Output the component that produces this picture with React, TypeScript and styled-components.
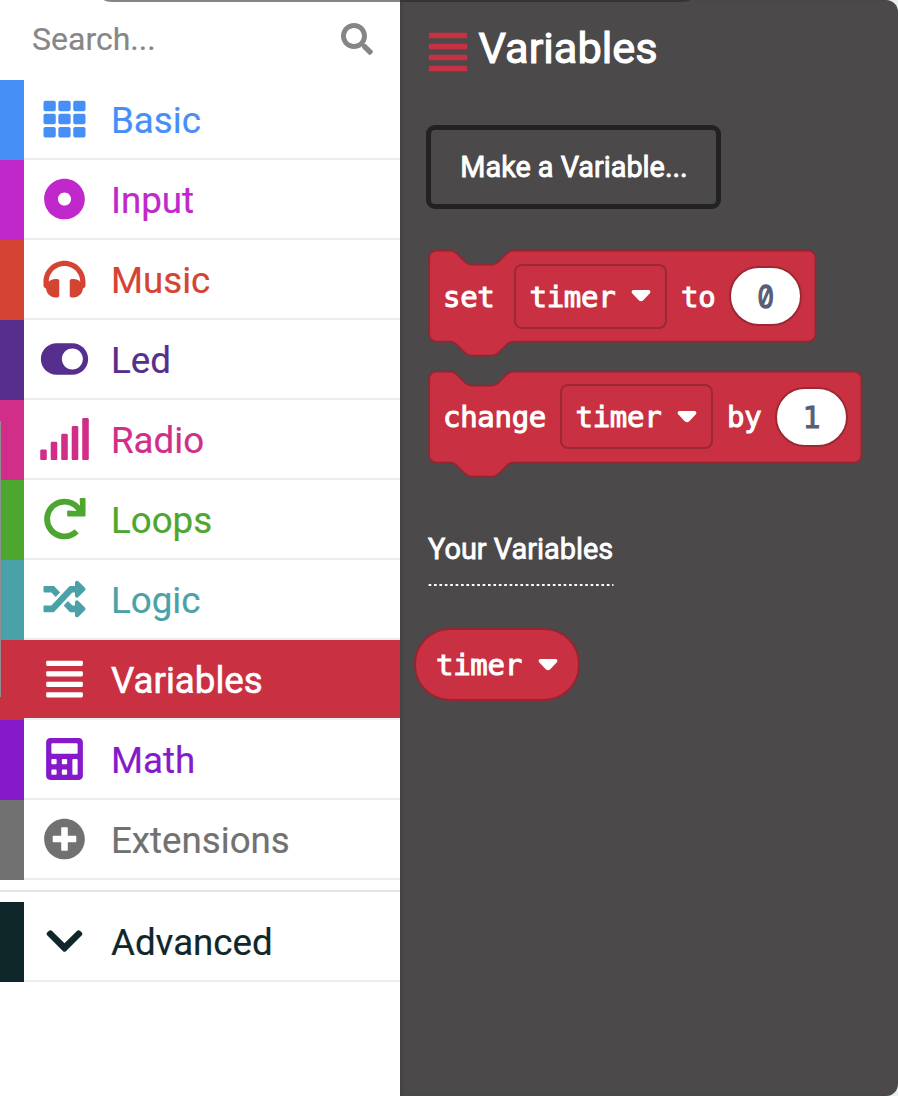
import React from "react";
import styled, { createGlobalStyle } from "styled-components";
import type { IconType } from "react-icons";
import {
  FaTh, FaDotCircle, FaHeadphones, FaToggleOn, FaSignal, FaRedo, FaRandom,
  FaAlignJustify, FaCalculator, FaPlusCircle, FaChevronDown, FaSearch,
} from "react-icons/fa";

const GlobalStyle = createGlobalStyle`
  * { box-sizing: border-box; }
  body { margin: 0; background: #e8eeee; font-family: Roboto, "Liberation Sans", sans-serif; }
`;

const Page = styled.div`
  display: flex;
  width: 898px;
  height: 1096px;
  overflow: hidden;
  background: #e9eeee;
`;

const Sidebar = styled.nav`
  position: relative;
  width: 400px;
  flex: none;
  background: #fff;
`;

const TopEdge = styled.div<{ $left: number; $width: number; $color: string; $side: "left" | "right" }>`
  position: absolute;
  top: 0;
  left: ${(p) => p.$left}px;
  width: ${(p) => p.$width}px;
  height: 2px;
  background: ${(p) => p.$color};
  border-bottom-${(p) => p.$side}-radius: 12px 2px;
`;

const ScrollEdge = styled.div`
  position: absolute;
  left: 0;
  top: 421px;
  width: 1px;
  height: 276px;
  background: #8f8f8f;
`;

const SearchBar = styled.div`
  display: flex;
  align-items: center;
  justify-content: space-between;
  height: 80px;
  padding: 0 27px 2px 32px;
  color: #868686;
  font-size: 32px;
  -webkit-text-stroke: 0.2px currentColor;
  svg { display: block; }
`;

const Row = styled.div<{ $color: string; $selected?: boolean }>`
  display: flex;
  height: 80px;
  background: ${(p) => (p.$selected ? p.$color : "#fff")};
  color: ${(p) => (p.$selected ? "#fff" : p.$color)};
`;

const Stripe = styled.div<{ $color: string }>`
  width: 24px;
  background: ${(p) => p.$color};
`;

const RowBody = styled.div`
  display: flex;
  flex: 1;
  align-items: center;
  border-bottom: 2px solid #eaeeee;
`;

const IconSlot = styled.div`
  display: flex;
  justify-content: center;
  width: 80px;
  margin-right: 7px;
  padding-left: 1px;
  svg { display: block; width: 53px; height: 42px; }
`;

const RowLabel = styled.span<{ $strong?: boolean }>`
  font-size: 36.7px;
  line-height: 44px;
  padding-top: 3px;
  -webkit-text-stroke: ${(p) => (p.$strong ? "0.6px" : "0.2px")} currentColor;
`;

const Divider = styled.div`
  height: 2px;
  margin: 10px 0;
  background: #e4e4e4;
`;

const Flyout = styled.main`
  position: relative;
  display: flex;
  flex: 1;
  flex-direction: column;
  align-items: flex-start;
  padding: 22px 0 0 28px;
  background: #4b494a;
  border-radius: 0 12px 12px 0;
  box-shadow: inset 3px 0 3px -1px #434142;
  color: #fff;
`;

const Title = styled.h1`
  display: flex;
  align-items: center;
  gap: 9px;
  height: 54px;
  margin: 0 0 0 -2.5px;
  font-size: 43.3px;
  font-weight: 400;
  -webkit-text-stroke: 1.1px currentColor;
  svg { display: block; width: 44px; height: 44px; margin-top: 5px; color: #c93142; stroke: none; }
`;

const TitleText = styled.span`
  padding-bottom: 2px;
`;

const MakeButton = styled.button`
  width: 295px;
  height: 84px;
  margin: 49px 0 41px -2px;
  padding: 0 0 0 1px;
  border: 5px solid #222;
  border-radius: 9px;
  background: transparent;
  color: #fff;
  font: 400 28.8px Roboto, "Liberation Sans", sans-serif;
  -webkit-text-stroke: 0.9px currentColor;
`;

const BlockBox = styled.div<{ $width: number }>`
  position: relative;
  display: flex;
  align-items: center;
  width: ${(p) => p.$width}px;
  height: 92px;
  margin: 0 0 28.5px 1px;
  padding-left: 14px;
  font: 400 29px "DejaVu Sans Mono", "Liberation Mono", monospace;
`;

const BlockShape = styled.svg`
  position: absolute;
  left: 0;
  top: 0;
  overflow: visible;
`;

const Word = styled.span<{ $width: number }>`
  position: relative;
  width: ${(p) => p.$width}px;
  padding-top: 1px;
  letter-spacing: -0.3px;
  -webkit-text-stroke: 1px currentColor;
`;

const Field = styled.div`
  position: relative;
  display: flex;
  align-items: center;
  justify-content: space-between;
  width: 153px;
  height: 65px;
  margin: 0 14px 0 -0.5px;
  padding: 0 14px 0 13.5px;
  border: 2px solid #9c2834;
  border-radius: 8px;
  svg { display: block; }
`;

const NumberOval = styled.div`
  position: relative;
  display: flex;
  align-items: center;
  justify-content: center;
  width: 73px;
  height: 60px;
  margin-left: -1px;
  border: 2px solid #9c2834;
  border-radius: 30px;
  background: #fff;
  color: #575e75;
`;

const Digit = styled.span<{ $slashed: boolean }>`
  display: block;
  padding-top: 1px;
  font-family: ${(p) => (p.$slashed ? "Inter, sans-serif" : "inherit")};
  font-size: ${(p) => (p.$slashed ? 31 : 30)}px;
  font-feature-settings: "zero";
  transform: ${(p) => (p.$slashed ? "scaleX(0.84)" : "none")};
  -webkit-text-stroke: ${(p) => (p.$slashed ? 1.4 : 0.9)}px currentColor;
`;

const Heading = styled.h2`
  width: 185px;
  height: 38px;
  margin: 39px 0 0;
  font-size: 28.9px;
  line-height: 38px;
  font-weight: 400;
  white-space: nowrap;
  -webkit-text-stroke: 0.8px currentColor;
`;

const Dots = styled.svg`
  display: block;
  margin: 16px 0 42px;
`;

const Pill = styled.div`
  display: flex;
  align-items: center;
  justify-content: space-between;
  width: 166px;
  height: 73px;
  margin-left: -14px;
  padding: 0 20.5px 0 20px;
  border: 2px solid #942531;
  border-radius: 36px;
  background: #c93142;
  font: 400 29px "DejaVu Sans Mono", "Liberation Mono", monospace;
  svg { display: block; }
`;

const Arrow = () => (
  <svg width="20" height="12" viewBox="0 0 20 12">
    <path d="M2.6 0H17.4C19.4 0 20 2 18.8 3.3L12 10.4Q10 12 8 10.4L1.2 3.3C0 2 .6 0 2.6 0Z" fill="#fff" />
  </svg>
);

const statementPath = (w: number, h: number) =>
  `M0 4A4 4 0 0 1 4 0H12c2 0 3 1 4 2l4 4c1 1 2 2 4 2h12c2 0 3-1 4-2l4-4c1-1 2-2 4-2H${w - 4}` +
  `a4 4 0 0 1 4 4V${h - 4}a4 4 0 0 1-4 4H48c-2 0-3 1-4 2l-4 4c-1 1-2 2-4 2h-12c-2 0-3-1-4-2l-4-4c-1-1-2-2-4-2H4a4 4 0 0 1-4-4Z`;

interface BlockProps {
  width: number;
  verb: string;
  verbWidth: number;
  joiner: string;
  value: string;
}

const Block = ({ width, verb, verbWidth, joiner, value }: BlockProps) => (
  <BlockBox $width={width}>
    <BlockShape width={width} height={92}>
      <path d={statementPath((width - 0.8) / 1.75, 52)} transform="translate(.2 .5) scale(1.75)" fill="#c93142" stroke="#942531" />
    </BlockShape>
    <Word $width={verbWidth}>{verb}</Word>
    <Field>
      <Word $width={88}>timer</Word>
      <Arrow />
    </Field>
    <Word $width={49}>{joiner}</Word>
    <NumberOval><Digit $slashed={value === "0"}>{value}</Digit></NumberOval>
  </BlockBox>
);

interface Category {
  name: string;
  color: string;
  icon: IconType;
  selected?: boolean;
}

const categories: Category[] = [
  { name: "Basic", color: "#458ff7", icon: FaTh },
  { name: "Input", color: "#c028cb", icon: FaDotCircle },
  { name: "Music", color: "#d54332", icon: FaHeadphones },
  { name: "Led", color: "#562e8d", icon: FaToggleOn },
  { name: "Radio", color: "#d12e8a", icon: FaSignal },
  { name: "Loops", color: "#4ca630", icon: FaRedo },
  { name: "Logic", color: "#4aa2a8", icon: FaRandom },
  { name: "Variables", color: "#c93142", icon: FaAlignJustify, selected: true },
  { name: "Math", color: "#861acb", icon: FaCalculator },
  { name: "Extensions", color: "#717171", icon: FaPlusCircle },
];

const CategoryRow = ({ name, color, icon: Icon, selected }: Category) => (
  <Row $color={color} $selected={selected}>
    <Stripe $color={color} />
    <RowBody>
      <IconSlot><Icon /></IconSlot>
      <RowLabel $strong={selected}>{name}</RowLabel>
    </RowBody>
  </Row>
);

export default function App() {
  return (
    <>
      <GlobalStyle />
      <Page>
        <Sidebar>
          <SearchBar>
            <span>Search...</span>
            <FaSearch size={32} />
          </SearchBar>
          {categories.map((c) => <CategoryRow key={c.name} {...c} />)}
          <Divider />
          <CategoryRow name="Advanced" color="#10272a" icon={FaChevronDown} />
          <TopEdge $left={104} $width={296} $color="#868484" $side="left" />
          <ScrollEdge />
        </Sidebar>
        <Flyout>
          <TopEdge $left={0} $width={290} $color="#353334" $side="right" />
          <Title><FaAlignJustify /><TitleText>Variables</TitleText></Title>
          <MakeButton>Make a Variable...</MakeButton>
          <Block width={387} verb="set" verbWidth={71.5} joiner="to" value="0" />
          <Block width={433} verb="change" verbWidth={117.5} joiner="by" value="1" />
          <Heading>Your Variables</Heading>
          <Dots width="186" height="2">
            <line x1="0.6" x2="185.5" y1="1" y2="1" stroke="#fff" strokeWidth="2" strokeDasharray="2.7 2.7" />
          </Dots>
          <Pill>
            <Word $width={88}>timer</Word>
            <Arrow />
          </Pill>
        </Flyout>
      </Page>
    </>
  );
}
